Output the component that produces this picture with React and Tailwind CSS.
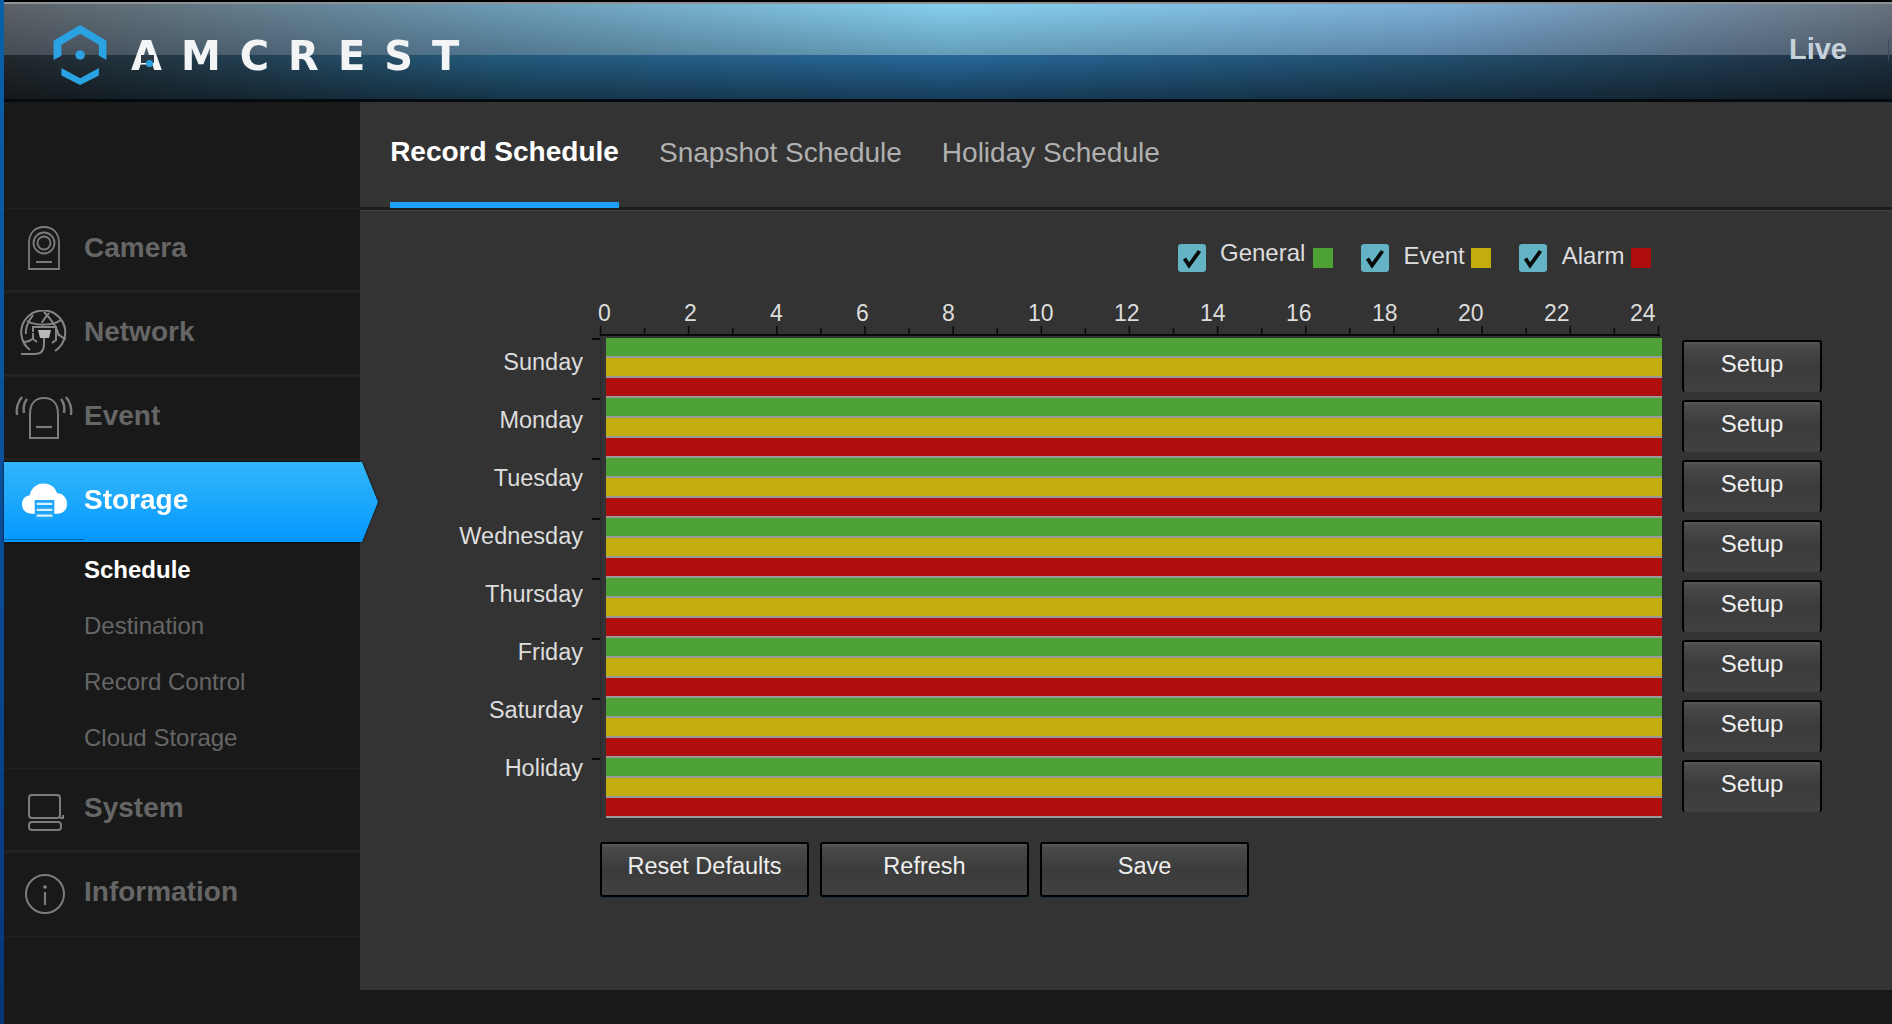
import React from "react";

const days = ["Sunday", "Monday", "Tuesday", "Wednesday", "Thursday", "Friday", "Saturday", "Holiday"];
const hourLabels = [0, 2, 4, 6, 8, 10, 12, 14, 16, 18, 20, 22, 24];
const subItems = ["Destination", "Record Control", "Cloud Storage"];

const btn =
  "flex justify-center rounded-[3px] border-x-2 border-t-2 border-black bg-[linear-gradient(180deg,#585858_0%,#4a4a4a_8%,#3b3b3b_50%,#414141_100%)] text-[#eeeeee]";

const CameraIcon = () => (
  <svg width="34" height="46" viewBox="0 0 34 46" fill="none" stroke="#7c7c7c" strokeWidth="1.8">
    <path d="M2 44V18C2 8 8 2 17 2s15 6 15 16v26z" />
    <circle cx="17" cy="18" r="10.5" />
    <circle cx="17" cy="18" r="6.5" />
    <path d="M9 37h16" strokeWidth="2" />
  </svg>
);

const NetworkIcon = () => (
  <svg width="50" height="48" viewBox="0 0 50 48" fill="none" stroke="#858585" strokeWidth="2" className="mt-[4px]">
    <path d="M11 40A22 22 0 1 1 36 41" />
    <path d="M8 11c8 5 26 5 34-1M14 5c-6 8-8 13-7 19M25 2c6 6 13 15 15 24M30 3c-4 5-6 7-7 10" />
    <path d="M14 22v-5h23v6M4 32c3 0 6 0 9-3M39 24c3 3 5 4 8 5" />
    <path d="M19 20h13l-2 8h-9z" fill="#b8b8b8" stroke="none" />
    <path d="M25 28v6c0 8-4 10-9 10H2M14 23v6l4 3M37 23v7l-4 3" />
  </svg>
);

const EventIcon = () => (
  <svg width="60" height="46" viewBox="0 0 60 46" fill="none" stroke="#7c7c7c" strokeWidth="2" className="mt-[3px]">
    <path d="M16 44V20C16 9 22 4 30 4s14 5 14 16v24z" />
    <path d="M22 33h16" strokeWidth="2.2" />
    <path d="M8 3C3 9 2 14 3 21M13 5c-3 4-4 9-3 14M52 3c5 6 6 11 5 18M47 5c3 4 4 9 3 14" strokeWidth="2.4" />
  </svg>
);

const StorageIcon = () => (
  <svg width="45" height="38" viewBox="0 0 46 38" className="mt-[2px]">
    <path
      d="M10 32C4 32 0 28 0 22c0-5 4-9 8-9 1-7 7-12 14-12 7 0 12 4 14 10 6 0 10 5 10 11 0 6-4 10-10 10z"
      fill="#ffffff"
    />
    <rect x="13" y="18" width="20" height="20" fill="#1da5fa" />
    <path d="M15 22h16M15 28h16M15 34h16" stroke="#d8f0ff" strokeWidth="2.4" />
  </svg>
);

const SystemIcon = () => (
  <svg width="38" height="38" viewBox="0 0 38 38" fill="none" stroke="#7c7c7c" strokeWidth="2" className="ml-[3px] mt-[8px]">
    <rect x="2" y="2" width="31" height="23" rx="3" />
    <rect x="2" y="29" width="32" height="8" rx="3" />
    <path d="M33 25h3v-3" />
  </svg>
);

const InfoIcon = () => (
  <svg width="42" height="42" viewBox="0 0 42 42" fill="none" stroke="#7c7c7c" strokeWidth="2" className="ml-[2px] mt-[4px]">
    <circle cx="21" cy="21" r="19" />
    <circle cx="21" cy="14" r="1.8" fill="#888888" stroke="none" />
    <path d="M21 19v13" strokeWidth="2.2" />
  </svg>
);

const NavItem = ({ icon, label, thin }) => (
  <div
    className={`flex h-[84px] items-center border-[#222222] text-[28px] font-bold text-[#666666] ${
      thin ? "border-b pb-[6px]" : "border-b-[3px] pb-[4px]"
    }`}
  >
    <div className="flex w-[80px] justify-center">{icon}</div>
    <span>{label}</span>
  </div>
);

const Legend = ({ label, swatch, textClass, gap, swatchGap }) => (
  <div className={`flex items-start ${gap}`}>
    <div className="flex h-[28px] w-[28px] items-center justify-center rounded-[3px] bg-[#64b3c4]">
      <svg width="28" height="28" viewBox="0 0 28 28" fill="none" stroke="#0a0a0a" strokeWidth="3.8">
        <path d="M6.5 14.5l4.5 7L21.5 7" />
      </svg>
    </div>
    <span className={`text-[24px] leading-[28px] text-[#dddddd] ${textClass}`}>{label}</span>
    <div className={`mt-[4px] h-[20px] w-[20px] ${swatchGap} ${swatch}`} />
  </div>
);

const ScheduleRow = () => (
  <div className="flex h-[60px]">
    <div className="h-full w-[14px] shrink-0">
      <div className="h-full w-[9px] border-r border-[#2a2a2a]">
        <div className="h-[2px] w-[8px] bg-[#0a0a0a]" />
      </div>
    </div>
    <div className="flex w-[1056px] flex-col">
      <div className="h-[18px] bg-[#4ea135]" />
      <div className="h-[2px] bg-[#999999]" />
      <div className="h-[18px] bg-[#c2ad0c]" />
      <div className="h-[2px] bg-[#999999]" />
      <div className="h-[18px] bg-[#ae0e0d]" />
      <div className="h-[2px] bg-[#999999]" />
    </div>
  </div>
);

const AxisTicks = () => (
  <svg width="1070" height="12" className="block">
    <rect x="8" y="8" width="1060" height="2" fill="#0a0a0a" />
    {Array.from({ length: 25 }, (_, i) => {
      const x = 8.5 + i * 44.08;
      return <line key={i} x1={x} x2={x} y1={i % 2 === 0 ? 0 : 2} y2="9" stroke="#0a0a0a" strokeWidth="1.5" />;
    })}
  </svg>
);

export default function App() {
  return (
    <div className="flex h-screen overflow-hidden bg-[#191919] font-['Liberation_Sans',Arial,sans-serif]">
      <div className="w-[4px] shrink-0 bg-[linear-gradient(180deg,#0960a8_0%,#0a4f9a_50%,#063478_100%)]" />

      <div className="flex min-w-0 flex-1 flex-col">
        {/* Top bar */}
        <header className="flex h-[102px] shrink-0 items-center justify-between [background:linear-gradient(#000,#000)_0_0/100%_2px_no-repeat,linear-gradient(#8b9298,#8b9298)_0_2px/100%_2px_no-repeat,linear-gradient(#030a10,#030a10)_0_99px/100%_3px_no-repeat,linear-gradient(180deg,rgba(0,0,0,0),rgba(0,0,0,0.42))_0_55px/100%_44px_no-repeat,linear-gradient(90deg,#22282c,#245a7c_26%,#27689a_50%,#23506f_76%,#1f3040)_0_55px/100%_44px_no-repeat,linear-gradient(180deg,rgba(0,10,30,0),rgba(0,10,30,0.26))_0_4px/100%_51px_no-repeat,linear-gradient(90deg,#5d6266,#6c9ab4_26%,#86d0ee_50%,#7dafd6_76%,#68727e)_0_4px/100%_51px_no-repeat,#000]">
          <div className="ml-[49px] flex items-center pt-[8px]">
            <svg width="54" height="60" viewBox="42 32 155 176">
              <path d="M42 78L120 32L197 78V135L175 122V90L120 58L65 90V122L42 135Z" fill="#2ba3e3" />
              <path d="M65 158L120 188L175 158V180L120 208L65 180Z" fill="#2ba3e3" />
              <circle cx="120" cy="120" r="14" fill="#2ba3e3" />
            </svg>
            <div className="relative ml-[24px] mt-[2px]">
              <span className="font-['DejaVu_Sans',sans-serif] text-[40px] font-bold leading-none tracking-[19px] text-[#f2f4f5] blur-[0.4px]">
                AMCREST
              </span>
              <div className="absolute left-[10px] top-[19px] h-[8px] w-[13px] bg-[#2b3a44]" />
              <div className="absolute left-[15px] top-[24px] h-[7px] w-[7px] rounded-full bg-[#2ba3e3]" />
            </div>
          </div>
          <div className="flex items-center pb-[3px]">
            <span className="text-[29px] font-bold text-[#c6d2da]">Live</span>
            <div className="ml-[41px] mr-[3px] h-[22px] w-px bg-[#3b4b58]" />
          </div>
        </header>

        <div className="flex min-h-0 flex-1 items-start">
          {/* Sidebar */}
          <aside className="w-[356px] shrink-0">
            <div className="h-[107px] border-b border-[#222222]" />
            <NavItem icon={<CameraIcon />} label="Camera" />
            <NavItem icon={<NetworkIcon />} label="Network" />
            <NavItem icon={<EventIcon />} label="Event" />
            <div className="relative z-10 mt-[1px] w-[374px] drop-shadow-[0_0_1px_#000]">
              <div className="flex h-[80px] items-center bg-[linear-gradient(180deg,#33b6fa_0%,#1ea9fc_45%,#0497fe_100%)] pb-[5px] text-[28px] font-bold text-white [clip-path:polygon(0_0,358px_0,374px_50%,358px_100%,0_100%)]">
                <div className="flex w-[80px] justify-center">
                  <StorageIcon />
                </div>
                <span>Storage</span>
              </div>
              <div className="absolute bottom-[2px] left-0 h-px w-[80px] bg-[#0a66b0]" />
            </div>
            <div className="h-[227px] border-b border-[#222222] pl-[80px] text-[24px] text-[#666666]">
              <div className="flex h-[56px] items-center font-bold text-white">Schedule</div>
              {subItems.map((s) => (
                <div key={s} className="flex h-[56px] items-center">
                  {s}
                </div>
              ))}
            </div>
            <NavItem icon={<SystemIcon />} label="System" />
            <NavItem icon={<InfoIcon />} label="Information" thin />
          </aside>

          {/* Main panel */}
          <main className="h-[888px] min-w-0 flex-1 bg-[#333333]">
            <div className="flex h-[108px] items-start gap-[40px] border-b-[3px] border-b-[#1c1c1c] pl-[30px] shadow-[0_1px_0_#444444]">
              <div className="flex h-[106px] w-[229px] items-center justify-center border-b-[6px] border-[#1e9ef5] text-[28px] font-bold whitespace-nowrap text-white">
                Record Schedule
              </div>
              <div className="flex h-[100px] items-center pt-[1px] text-[28px] text-[#b0b0b0]">Snapshot Schedule</div>
              <div className="flex h-[100px] items-center pt-[1px] text-[28px] text-[#b0b0b0]">Holiday Schedule</div>
            </div>

            <div className="pt-[34px]">
              <div className="ml-[818px] flex h-[28px] items-start">
                <Legend label="General" swatch="bg-[#4ea135]" swatchGap="ml-[8px]" textClass="ml-[14px] -mt-[5px]" />
                <Legend label="Event" swatch="bg-[#c2ad0c]" swatchGap="ml-[6px]" textClass="ml-[14px] -mt-[2px]" gap="ml-[28px]" />
                <Legend label="Alarm" swatch="bg-[#ae0e0d]" swatchGap="ml-[7px]" textClass="ml-[15px] -mt-[2px]" gap="ml-[28px]" />
              </div>

              <div className="mt-[28px] flex items-start">
                <div className="w-[232px] shrink-0 pr-[9px] pt-[34px] text-right text-[23.5px] text-[#dddddd]">
                  {days.map((d) => (
                    <div key={d} className="flex h-[58px] items-center justify-end">
                      {d}
                    </div>
                  ))}
                </div>

                <div className="w-[1070px] shrink-0">
                  <div className="ml-[6px] flex h-[26px] items-center text-[23px] text-[#dddddd]">
                    {hourLabels.map((h) => (
                      <div key={h} className="w-[86px] shrink-0">
                        {h}
                      </div>
                    ))}
                  </div>
                  <AxisTicks />
                  {days.map((d) => (
                    <ScheduleRow key={d} />
                  ))}
                  <div className="mt-[24px] ml-[8px] flex gap-[11px]">
                    {["Reset Defaults", "Refresh", "Save"].map((b) => (
                      <div
                        key={b}
                        className={`${btn} h-[55px] w-[209px] items-center border-b-2 border-b-black pb-[5px] text-[23.5px] shadow-[0_1px_0_#10383f]`}
                      >
                        {b}
                      </div>
                    ))}
                  </div>
                </div>

                <div className="ml-[20px] flex w-[140px] shrink-0 flex-col gap-[8px] pt-[40px]">
                  {days.map((d) => (
                    <div key={d} className={`${btn} h-[52px] items-center pb-[6px] text-[24px]`}>
                      Setup
                    </div>
                  ))}
                </div>
              </div>
            </div>
          </main>
        </div>
      </div>
    </div>
  );
}
